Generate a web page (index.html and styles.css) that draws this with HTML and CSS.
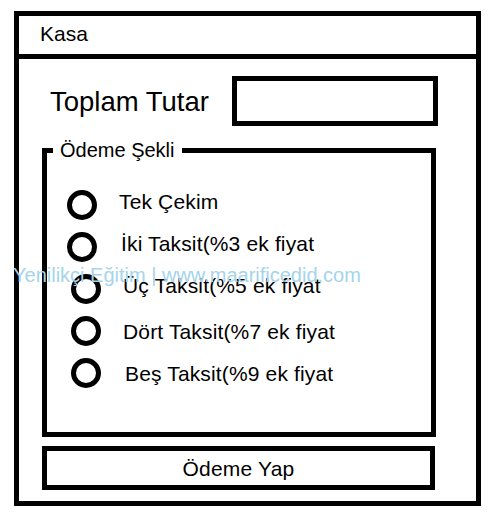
FILE: index.html
```html
<!DOCTYPE html>
<html lang="tr">
<head>
<meta charset="utf-8">
<title>Kasa</title>
<link rel="stylesheet" href="styles.css">
</head>
<body>
<div class="window">
  <div class="titlebar">Kasa</div>
  <div class="content">
    <div class="total-row">
      <span class="total-label">Toplam Tutar</span>
      <div class="total-box"></div>
    </div>
    <fieldset class="payment">
      <legend class="payment-legend">Ödeme Şekli</legend>
      <ul class="options">
        <li class="option raised"><span class="radio"></span><span class="option-text">Tek Çekim</span></li>
        <li class="option raised"><span class="radio"></span><span class="option-text nudge">İki Taksit(%3 ek fiyat</span></li>
        <li class="option raised shifted"><span class="radio"></span><span class="option-text">Üç Taksit(%5 ek fiyat</span></li>
        <li class="option shifted"><span class="radio"></span><span class="option-text">Dört Taksit(%7 ek fiyat</span></li>
        <li class="option shifted"><span class="radio"></span><span class="option-text nudge">Beş Taksit(%9 ek fiyat</span></li>
      </ul>
    </fieldset>
    <div class="pay-button">Ödeme Yap</div>
  </div>
</div>
<div class="watermark">Yenilikçi Eğitim | www.maarificedid.com</div>
</body>
</html>
```

FILE: styles.css
```css
html, body {
  margin: 0;
  padding: 0;
  background: #ffffff;
}

body {
  font-family: "Liberation Sans", Arial, sans-serif;
  color: #000000;
  width: 500px;
  height: 525px;
  overflow: hidden;
}

.window {
  box-sizing: border-box;
  margin: 11px 0 0 14px;
  width: 467px;
  height: 495px;
  border: 5px solid #000;
  display: flex;
  flex-direction: column;
}

.titlebar {
  box-sizing: border-box;
  height: 43px;
  padding: 6px 0 0 21px;
  border-bottom: 5px solid #000;
  font-size: 21px;
  line-height: 23px;
}

.content {
  display: flex;
  flex-direction: column;
  padding-left: 23px;
}

.total-row {
  display: flex;
  align-items: center;
  margin-top: 17px;
}

.total-label {
  width: 190px;
  padding-left: 8px;
  box-sizing: border-box;
  font-size: 27.5px;
  line-height: 31px;
}

.total-box {
  box-sizing: border-box;
  width: 206px;
  height: 50px;
  border: 5px solid #000;
}

.payment {
  box-sizing: border-box;
  width: 394px;
  margin: 13px 0 0 0;
  padding: 0;
  border: 5px solid #000;
  min-width: 0;
}

.payment-legend {
  margin-left: 6px;
  padding: 0 7px;
  font-size: 20px;
  line-height: 23px;
}

.options {
  list-style: none;
  margin: 0;
  padding: 22px 0 38px 0;
}

.option {
  display: flex;
  align-items: center;
  height: 42px;
  padding-left: 20px;
}

.option.shifted {
  padding-left: 24px;
}

.radio {
  box-sizing: border-box;
  flex: none;
  width: 30px;
  height: 30px;
  border: 5px solid #000;
  border-radius: 50%;
}

.option-text {
  margin-left: 22px;
  font-size: 21px;
  letter-spacing: 0.15px;
  line-height: 23px;
}

.option-text.nudge {
  margin-left: 24px;
}

.option.raised .option-text {
  padding-bottom: 7px;
}

.pay-button {
  box-sizing: border-box;
  width: 393px;
  height: 44px;
  margin-top: 9px;
  border: 5px solid #000;
  display: flex;
  align-items: center;
  justify-content: center;
  font-size: 21px;
  letter-spacing: 0.2px;
  line-height: 23px;
}

.watermark {
  position: absolute;
  left: 13px;
  top: 264px;
  font-size: 20px;
  line-height: 23px;
  color: #a6d4ea;
  white-space: pre;
  pointer-events: none;
}
```
